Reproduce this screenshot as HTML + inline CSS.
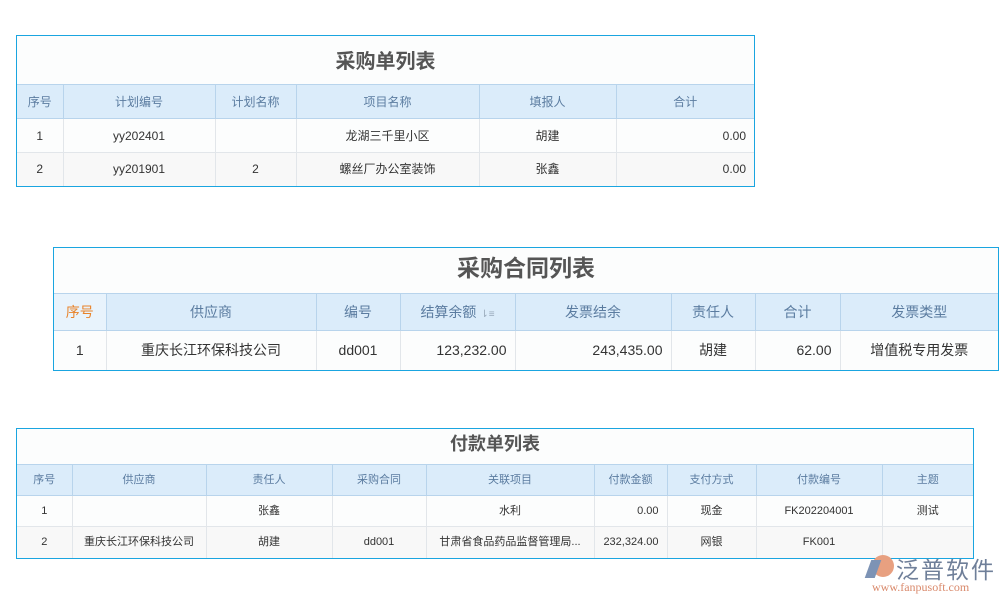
<!DOCTYPE html>
<html><head><meta charset="utf-8"><style>
body{margin:0;width:1000px;height:600px;background:#fff;position:relative;overflow:hidden;font-family:"Liberation Sans","Noto Sans CJK SC",sans-serif;}
.box{position:absolute;border:1px solid #1aa5e0;background:#fcfdfd;box-sizing:border-box;}
.title{text-align:center;font-weight:bold;color:#555;box-sizing:border-box;}
table{border-collapse:collapse;table-layout:fixed;width:100%;}
td,th{border:1px solid #e2e6ea;text-align:center;color:#333;white-space:nowrap;overflow:hidden;padding:0 8px;line-height:1;}
th{background:#dbecfa;color:#5b7ca0;font-weight:normal;border-color:#b8d4ec;}
tr.r2 td{background:#f8f8f8;}
.r{text-align:right;}
tr>*:first-child{border-left:none}
tr>*:last-child{border-right:none}
tr:last-child td{border-bottom:none}
</style></head><body>

<div class="box" style="left:16px;top:35px;width:739px;">
<div class="title" style="height:48px;line-height:52px;font-size:20px;">采购单列表</div>
<table style="font-size:12px;">
<colgroup><col style="width:46px"><col style="width:152px"><col style="width:81px"><col style="width:183px"><col style="width:137px"><col></colgroup>
<tr style="height:34px"><th>序号</th><th>计划编号</th><th>计划名称</th><th>项目名称</th><th>填报人</th><th>合计</th></tr>
<tr style="height:34px"><td>1</td><td>yy202401</td><td></td><td>龙湖三千里小区</td><td>胡建</td><td class="r">0.00</td></tr>
<tr style="height:33px" class="r2"><td>2</td><td>yy201901</td><td>2</td><td>螺丝厂办公室装饰</td><td>张鑫</td><td class="r">0.00</td></tr>
</table></div>

<div class="box" style="left:53px;top:247px;width:946px;">
<div class="title" style="height:45px;line-height:40px;font-size:23px;">采购合同列表</div>
<table style="font-size:14px;">
<colgroup><col style="width:52px"><col style="width:210px"><col style="width:84px"><col style="width:115px"><col style="width:156px"><col style="width:84px"><col style="width:85px"><col></colgroup>
<tr style="height:37px"><th style="color:#e8832a;background:#e8f3fc">序号</th><th>供应商</th><th>编号</th><th>结算余额 <span style="font-size:10px;color:#9ab">⇂≡</span></th><th>发票结余</th><th>责任人</th><th>合计</th><th>发票类型</th></tr>
<tr style="height:39px"><td>1</td><td>重庆长江环保科技公司</td><td>dd001</td><td class="r">123,232.00</td><td class="r">243,435.00</td><td>胡建</td><td class="r">62.00</td><td>增值税专用发票</td></tr>
</table></div>

<div class="box" style="left:16px;top:428px;width:958px;">
<div class="title" style="height:35px;line-height:30px;font-size:18px;">付款单列表</div>
<table style="font-size:11px;">
<colgroup><col style="width:55px"><col style="width:134px"><col style="width:126px"><col style="width:94px"><col style="width:168px"><col style="width:73px"><col style="width:89px"><col style="width:126px"><col></colgroup>
<tr style="height:31px"><th>序号</th><th>供应商</th><th>责任人</th><th>采购合同</th><th>关联项目</th><th>付款金额</th><th>支付方式</th><th>付款编号</th><th>主题</th></tr>
<tr style="height:31px"><td>1</td><td></td><td>张鑫</td><td></td><td>水利</td><td class="r">0.00</td><td>现金</td><td>FK202204001</td><td>测试</td></tr>
<tr style="height:31px" class="r2"><td>2</td><td>重庆长江环保科技公司</td><td>胡建</td><td>dd001</td><td>甘肃省食品药品监督管理局...</td><td class="r">232,324.00</td><td>网银</td><td>FK001</td><td></td></tr>
</table></div>

<div style="position:absolute;left:872px;top:555px;width:22px;height:22px;border-radius:50%;background:#e8a080;"></div>
<div style="position:absolute;left:868px;top:560px;width:10px;height:18px;background:#7d93b5;transform:skewX(-20deg);"></div>
<div style="position:absolute;left:896px;top:551px;font-size:23px;color:#6f7f99;letter-spacing:2px;font-family:'Noto Sans CJK SC',sans-serif;">泛普软件</div>
<div style="position:absolute;left:872px;top:580px;font-size:12px;color:#d9896b;font-family:'Liberation Serif',serif;">www.fanpusoft.com</div>
</body></html>
